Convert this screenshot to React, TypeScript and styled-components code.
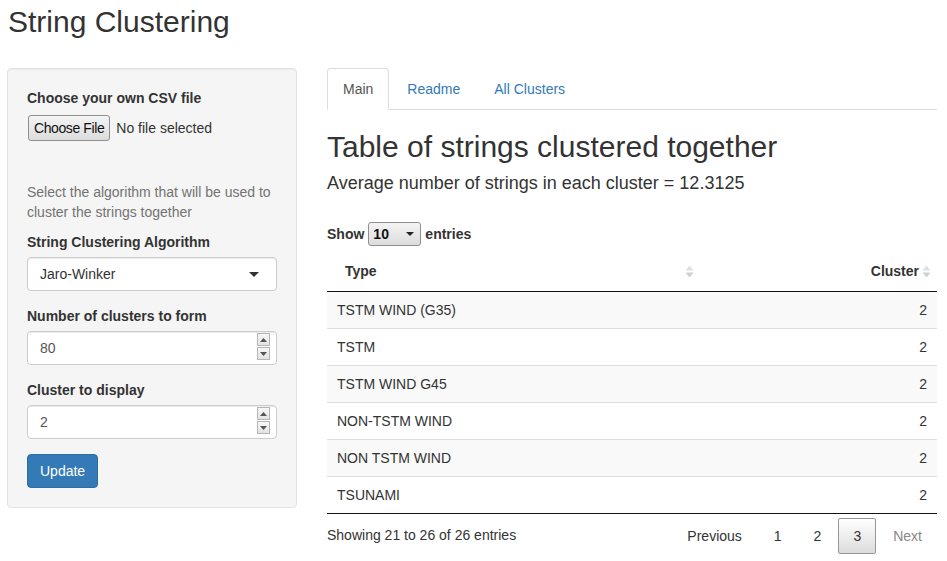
import React from "react";
import styled, { createGlobalStyle } from "styled-components";

const GlobalStyle = createGlobalStyle`
  body {
    margin: 0;
    background: #fff;
    color: #333;
    font-family: "Liberation Sans", Arial, Helvetica, sans-serif;
    font-size: 14px;
    line-height: 20px;
  }
  * {
    box-sizing: border-box;
  }
`;

const PageTitle = styled.h2`
  margin: 5px 0 30px 8px;
  font-size: 30px;
  font-weight: 500;
  line-height: 33px;
  color: #333;
`;

const Layout = styled.div`
  display: flex;
  align-items: flex-start;
  gap: 30px;
  padding-left: 7px;
`;

const Well = styled.div`
  width: 290px;
  padding: 19px;
  background: #f5f5f5;
  border: 1px solid #e3e3e3;
  border-radius: 4px;
  box-shadow: inset 0 1px 1px rgba(0, 0, 0, 0.05);
  display: flex;
  flex-direction: column;
`;

const FormGroup = styled.div<{ $gap?: number }>`
  display: flex;
  flex-direction: column;
  margin-bottom: ${p => p.$gap ?? 15}px;
`;

const Label = styled.label`
  font-weight: 700;
  margin-bottom: 5px;
`;

const FileRow = styled.div`
  display: flex;
  align-items: center;
  gap: 6px;
  padding-left: 1px;
  margin-top: 2px;
`;

const FileButton = styled.span`
  display: inline-flex;
  align-items: center;
  height: 26px;
  padding: 0 5px;
  border: 1px solid #8f8f8f;
  border-radius: 3px;
  background: linear-gradient(#f4f4f4, #dcdcdc);
  color: #111;
  font-size: 14px;
  letter-spacing: -0.4px;
`;

const HelpText = styled.p`
  margin: 0 0 10px;
  color: #737373;
`;

const InputBox = styled.div`
  position: relative;
  display: flex;
  align-items: center;
  height: 34px;
  padding: 6px 12px;
  background: #fff;
  border: 1px solid #ccc;
  border-radius: 4px;
  box-shadow: inset 0 1px 1px rgba(0, 0, 0, 0.075);
  color: #555;
`;

const SelectText = styled.span`
  color: #333;
  flex: 1;
`;

const Caret = styled.span`
  width: 0;
  height: 0;
  border-left: 5px solid transparent;
  border-right: 5px solid transparent;
  border-top: 5px solid #333;
  margin-right: 5px;
`;

const Spinner = styled.div`
  position: absolute;
  right: 6px;
  top: 1px;
  display: flex;
  flex-direction: column;
  gap: 1px;
`;

const SpinHalf = styled.span`
  display: flex;
  align-items: center;
  justify-content: center;
  width: 13px;
  height: 13px;
  background: linear-gradient(#f7f7f7, #e3e3e3);
  border: 1px solid #b5b5b5;
`;

const PrimaryButton = styled.button`
  align-self: flex-start;
  height: 34px;
  padding: 6px 12px;
  background: #337ab7;
  border: 1px solid #2e6da4;
  border-radius: 4px;
  color: #fff;
  font: inherit;
`;

const Main = styled.div`
  width: 610px;
  display: flex;
  flex-direction: column;
`;

const Tabs = styled.ul`
  display: flex;
  margin: 0;
  padding: 0;
  list-style: none;
  border-bottom: 1px solid #ddd;
`;

const Tab = styled.li<{ $active?: boolean }>`
  margin-right: 2px;
  margin-bottom: -1px;
  padding: 10px 15px;
  border: 1px solid ${p => (p.$active ? "#ddd" : "transparent")};
  border-bottom-color: ${p => (p.$active ? "#fff" : "transparent")};
  border-radius: 4px 4px 0 0;
  background: ${p => (p.$active ? "#fff" : "transparent")};
  color: ${p => (p.$active ? "#555" : "#337ab7")};
`;

const Heading = styled.h2`
  margin: 20px 0 10px;
  font-size: 30px;
  font-weight: 500;
  line-height: 33px;
`;

const SubHeading = styled.h4`
  margin: 0 0 29px;
  font-size: 18px;
  font-weight: 500;
  line-height: 20px;
`;

const LengthRow = styled.div`
  display: flex;
  align-items: center;
  gap: 4px;
  font-weight: 700;
  height: 24px;
  margin-bottom: 5px;
`;

const MiniSelect = styled.span`
  display: inline-flex;
  align-items: center;
  justify-content: space-between;
  width: 53px;
  height: 24px;
  padding: 0 6px 0 4px;
  border: 1px solid #8f8f8f;
  border-radius: 3px;
  background: linear-gradient(#f4f4f4, #dcdcdc);
  color: #111;
`;

const MiniCaret = styled.span`
  width: 0;
  height: 0;
  border-left: 4px solid transparent;
  border-right: 4px solid transparent;
  border-top: 4px solid #222;
`;

const Table = styled.table`
  width: 610px;
  border-collapse: collapse;
  border-bottom: 1px solid #111;
`;

const HeadCell = styled.th<{ $right?: boolean; $width?: number }>`
  width: ${p => (p.$width ? `${p.$width}px` : "auto")};
  padding: 10px 18px;
  text-align: ${p => (p.$right ? "right" : "left")};
  font-weight: 700;
  border-bottom: 1px solid #111;
  position: relative;
`;

const SortIcon = styled.svg`
  position: absolute;
  right: 6px;
  top: 14px;
`;

const Row = styled.tr<{ $odd: boolean }>`
  background: ${p => (p.$odd ? "#f9f9f9" : "#fff")};
`;

const Cell = styled.td<{ $right?: boolean; $ruled?: boolean }>`
  padding: 8px 10px;
  text-align: ${p => (p.$right ? "right" : "left")};
  border-top: ${p => (p.$ruled ? "1px solid #ddd" : "none")};
`;

const Footer = styled.div`
  display: flex;
  justify-content: space-between;
  align-items: flex-start;
`;

const Info = styled.div`
  padding-top: 11px;
`;

const Paginate = styled.div`
  display: flex;
  padding-top: 4px;
`;

const PageButton = styled.span<{ $current?: boolean; $disabled?: boolean }>`
  margin-left: 2px;
  padding: 7px 14px;
  border: 1px solid ${p => (p.$current ? "#979797" : "transparent")};
  border-radius: 2px;
  background: ${p => (p.$current ? "linear-gradient(#fff, #dcdcdc)" : "transparent")};
  color: ${p => (p.$disabled ? "#888" : "#333")};
`;

const SortArrows = () => (
  <SortIcon width="9" height="13" viewBox="0 0 9 13">
    <path d="M4.5 0.5 L8.5 5.5 L0.5 5.5 Z" fill="#e0e0e0" />
    <path d="M4.5 12.5 L8.5 7.5 L0.5 7.5 Z" fill="#d0d0d0" />
  </SortIcon>
);

const NumberInput = ({ value }: { value: string }) => (
  <InputBox>
    {value}
    <Spinner>
      <SpinHalf>
        <svg width="7" height="4" viewBox="0 0 7 4">
          <path d="M3.5 0 L7 4 L0 4 Z" fill="#555" />
        </svg>
      </SpinHalf>
      <SpinHalf>
        <svg width="7" height="4" viewBox="0 0 7 4">
          <path d="M0 0 L7 0 L3.5 4 Z" fill="#555" />
        </svg>
      </SpinHalf>
    </Spinner>
  </InputBox>
);

const rows = [
  "TSTM WIND (G35)",
  "TSTM",
  "TSTM WIND G45",
  "NON-TSTM WIND",
  "NON TSTM WIND",
  "TSUNAMI",
];

const App: React.FC = () => (
  <>
    <GlobalStyle />
    <PageTitle>String Clustering</PageTitle>
    <Layout>
      <Well>
        <FormGroup $gap={41}>
          <Label>Choose your own CSV file</Label>
          <FileRow>
            <FileButton>Choose File</FileButton>
            No file selected
          </FileRow>
        </FormGroup>
        <HelpText>
          Select the algorithm that will be used to cluster the strings
          together
        </HelpText>
        <FormGroup>
          <Label>String Clustering Algorithm</Label>
          <InputBox>
            <SelectText>Jaro-Winker</SelectText>
            <Caret />
          </InputBox>
        </FormGroup>
        <FormGroup>
          <Label>Number of clusters to form</Label>
          <NumberInput value="80" />
        </FormGroup>
        <FormGroup>
          <Label>Cluster to display</Label>
          <NumberInput value="2" />
        </FormGroup>
        <PrimaryButton>Update</PrimaryButton>
      </Well>
      <Main>
        <Tabs>
          <Tab $active>Main</Tab>
          <Tab>Readme</Tab>
          <Tab>All Clusters</Tab>
        </Tabs>
        <Heading>Table of strings clustered together</Heading>
        <SubHeading>Average number of strings in each cluster = 12.3125</SubHeading>
        <LengthRow>
          Show
          <MiniSelect>
            10
            <MiniCaret />
          </MiniSelect>
          entries
        </LengthRow>
        <Table>
          <thead>
            <tr>
              <HeadCell $width={373}>
                Type
                <SortArrows />
              </HeadCell>
              <HeadCell $right>
                Cluster
                <SortArrows />
              </HeadCell>
            </tr>
          </thead>
          <tbody>
            {rows.map((r, i) => (
              <Row key={r} $odd={i % 2 === 0}>
                <Cell $ruled={i > 0}>{r}</Cell>
                <Cell $right $ruled={i > 0}>
                  2
                </Cell>
              </Row>
            ))}
          </tbody>
        </Table>
        <Footer>
          <Info>Showing 21 to 26 of 26 entries</Info>
          <Paginate>
            <PageButton>Previous</PageButton>
            <PageButton>1</PageButton>
            <PageButton>2</PageButton>
            <PageButton $current>3</PageButton>
            <PageButton $disabled>Next</PageButton>
          </Paginate>
        </Footer>
      </Main>
    </Layout>
  </>
);

export default App;
